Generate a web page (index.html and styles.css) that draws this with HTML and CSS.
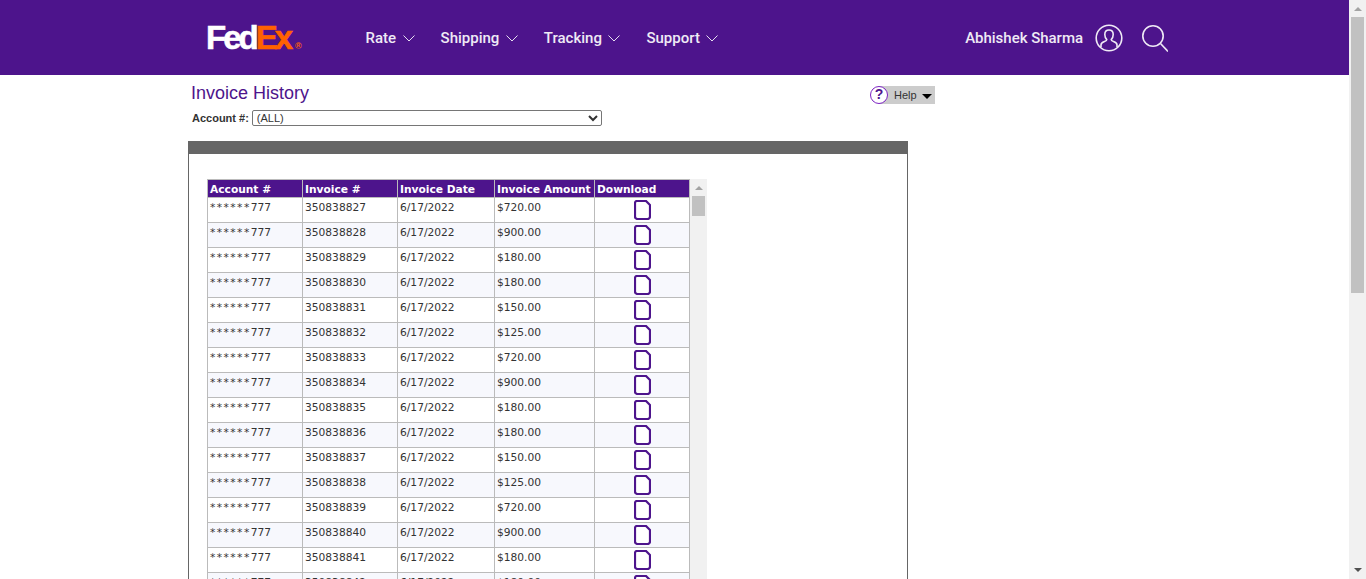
FILE: index.html
```html
<!DOCTYPE html>
<html lang="en">
<head>
  <meta charset="UTF-8">
  <title>Invoice History</title>
  <link rel="stylesheet" href="styles.css">
</head>
<body>

<svg class="defs" width="0" height="0">
  <symbol id="doc" viewBox="0 0 17 20">
    <path d="M3 1H12L16 5V16.500A2.500 2.500 0 0 1 13.500 19H3.500A2.500 2.500 0 0 1 1 16.500V3A2 2 0 0 1 3 1Z" fill="#fff" stroke="#4d148c" stroke-width="2.200"/>
  </symbol>
  <symbol id="chev" viewBox="0 0 12 7">
    <path d="M.5 .5L6 6L11.500 .5" fill="none" stroke="#e6dff0" stroke-width="1"/>
  </symbol>
</svg>

<div class="page">
  <div class="main">
    <header class="topbar">
      <div class="logo"><span class="fed">Fed</span><span class="ex">Ex</span><span class="reg">®</span></div>
      <nav class="nav">
        <a class="navitem">Rate <svg class="chev"><use href="#chev"/></svg></a>
        <a class="navitem">Shipping <svg class="chev"><use href="#chev"/></svg></a>
        <a class="navitem">Tracking <svg class="chev"><use href="#chev"/></svg></a>
        <a class="navitem">Support <svg class="chev"><use href="#chev"/></svg></a>
      </nav>
      <div class="user">
        <span class="username">Abhishek Sharma</span>
        <svg class="usericon" width="28" height="28" viewBox="0 0 28 28" fill="none" stroke="#efeaf5" stroke-width="1.600">
          <circle cx="14" cy="14" r="12.800"/>
          <path d="M6 23V21C6 19 7.500 18.300 9.500 17.600C11 17.100 11.800 16.600 11.800 15.600C10.500 14.300 9.800 12.500 9.800 10.500C9.800 7.800 11.500 6 14 6C16.500 6 18.200 7.800 18.200 10.500C18.200 12.500 17.500 14.300 16.200 15.600C16.200 16.600 17 17.100 18.500 17.600C20.500 18.300 22 19 22 21V23"/>
        </svg>
        <svg class="searchicon" width="26" height="27" viewBox="0 0 26 27" fill="none" stroke="#efeaf5" stroke-width="1.600">
          <circle cx="11" cy="11" r="10.200"/>
          <path d="M18.500 18.500L26 26.500"/>
        </svg>
      </div>
    </header>

    <div class="content">
      <div class="titlerow">
        <div>
          <h1>Invoice History</h1>
          <form class="acct">
            <label for="acct">Account #:</label>
            <select id="acct"><option>(ALL)</option></select>
          </form>
        </div>
        <div class="help">
          <span class="helpmark">?</span>
          <span class="helptext">Help</span>
          <span class="helparrow"></span>
        </div>
      </div>

      <div class="panel">
        <div class="panelbar"></div>
        <div class="panelbody">
          <table class="invoices">
            <colgroup>
              <col class="c1"><col class="c2"><col class="c3"><col class="c4"><col class="c5">
            </colgroup>
            <thead>
              <tr><th>Account #</th><th>Invoice #</th><th>Invoice Date</th><th>Invoice Amount</th><th>Download</th></tr>
            </thead>
            <tbody>
              <tr><td><span class="mask">******</span>777</td><td>350838827</td><td>6/17/2022</td><td>$720.00</td><td class="dl"><svg class="doc"><use href="#doc"/></svg></td></tr>
              <tr><td><span class="mask">******</span>777</td><td>350838828</td><td>6/17/2022</td><td>$900.00</td><td class="dl"><svg class="doc"><use href="#doc"/></svg></td></tr>
              <tr><td><span class="mask">******</span>777</td><td>350838829</td><td>6/17/2022</td><td>$180.00</td><td class="dl"><svg class="doc"><use href="#doc"/></svg></td></tr>
              <tr><td><span class="mask">******</span>777</td><td>350838830</td><td>6/17/2022</td><td>$180.00</td><td class="dl"><svg class="doc"><use href="#doc"/></svg></td></tr>
              <tr><td><span class="mask">******</span>777</td><td>350838831</td><td>6/17/2022</td><td>$150.00</td><td class="dl"><svg class="doc"><use href="#doc"/></svg></td></tr>
              <tr><td><span class="mask">******</span>777</td><td>350838832</td><td>6/17/2022</td><td>$125.00</td><td class="dl"><svg class="doc"><use href="#doc"/></svg></td></tr>
              <tr><td><span class="mask">******</span>777</td><td>350838833</td><td>6/17/2022</td><td>$720.00</td><td class="dl"><svg class="doc"><use href="#doc"/></svg></td></tr>
              <tr><td><span class="mask">******</span>777</td><td>350838834</td><td>6/17/2022</td><td>$900.00</td><td class="dl"><svg class="doc"><use href="#doc"/></svg></td></tr>
              <tr><td><span class="mask">******</span>777</td><td>350838835</td><td>6/17/2022</td><td>$180.00</td><td class="dl"><svg class="doc"><use href="#doc"/></svg></td></tr>
              <tr><td><span class="mask">******</span>777</td><td>350838836</td><td>6/17/2022</td><td>$180.00</td><td class="dl"><svg class="doc"><use href="#doc"/></svg></td></tr>
              <tr><td><span class="mask">******</span>777</td><td>350838837</td><td>6/17/2022</td><td>$150.00</td><td class="dl"><svg class="doc"><use href="#doc"/></svg></td></tr>
              <tr><td><span class="mask">******</span>777</td><td>350838838</td><td>6/17/2022</td><td>$125.00</td><td class="dl"><svg class="doc"><use href="#doc"/></svg></td></tr>
              <tr><td><span class="mask">******</span>777</td><td>350838839</td><td>6/17/2022</td><td>$720.00</td><td class="dl"><svg class="doc"><use href="#doc"/></svg></td></tr>
              <tr><td><span class="mask">******</span>777</td><td>350838840</td><td>6/17/2022</td><td>$900.00</td><td class="dl"><svg class="doc"><use href="#doc"/></svg></td></tr>
              <tr><td><span class="mask">******</span>777</td><td>350838841</td><td>6/17/2022</td><td>$180.00</td><td class="dl"><svg class="doc"><use href="#doc"/></svg></td></tr>
              <tr><td><span class="mask">******</span>777</td><td>350838842</td><td>6/17/2022</td><td>$180.00</td><td class="dl"><svg class="doc"><use href="#doc"/></svg></td></tr>
            </tbody>
          </table>
          <div class="scroll inner">
            <span class="up"></span>
            <span class="thumb"></span>
          </div>
        </div>
      </div>
    </div>
  </div>

  <div class="scroll outer">
    <span class="up"></span>
    <span class="thumb"></span>
    <span class="down"></span>
  </div>
</div>

</body>
</html>
```

FILE: styles.css
```css
html, body {
  margin: 0;
  height: 579px;
  overflow: hidden;
  background: #fff;
}
.defs {
  position: absolute;
}
.page {
  display: flex;
  height: 579px;
  font-family: "Liberation Sans", Arial, sans-serif;
}
.main {
  flex: 1;
  min-width: 0;
  overflow: hidden;
}

/* top bar */
.topbar {
  display: flex;
  align-items: center;
  height: 75px;
  padding: 0 181px 0 206px;
  background: #4d148c;
}
.logo {
  display: flex;
  align-items: baseline;
  width: 159.5px;
  font-family: "Liberation Sans", sans-serif;
  font-weight: bold;
  font-size: 33px;
  letter-spacing: -3px;
  line-height: 1;
  -webkit-text-stroke: .6px currentColor;
}
.fed {
  color: #fff;
}
.ex {
  color: #ff6200;
}
.reg {
  font-size: 9px;
  letter-spacing: 0;
  font-weight: bold;
  color: #ff6200;
  margin-left: 5px;
  -webkit-text-stroke: 0;
}
.nav {
  display: flex;
  gap: 26px;
}
.navitem {
  display: flex;
  align-items: center;
  gap: 6.5px;
  font-family: Roboto, sans-serif;
  font-weight: 500;
  font-size: 15px;
  color: #efeaf5;
}
.chev {
  width: 12px;
  height: 7px;
  margin-top: 2px;
}
.user {
  display: flex;
  align-items: center;
  margin-left: auto;
}
.username {
  font-family: Roboto, sans-serif;
  font-weight: 500;
  font-size: 15px;
  letter-spacing: -.02px;
  color: #efeaf5;
  margin-right: 12px;
}
.usericon {
  margin-right: 19px;
}
.searchicon {
  margin-top: 1px;
}

/* heading row */
.content {
  padding-left: 188px;
}
.titlerow {
  display: flex;
  width: 747px;
  height: 66px;
  justify-content: space-between;
}
h1 {
  margin: 7px 0 0 3px;
  font-size: 18px;
  line-height: 22px;
  font-weight: normal;
  color: #4d148c;
}
.acct {
  display: flex;
  align-items: center;
  gap: 3px;
  margin: 6px 0 0 4px;
}
.acct label {
  font-size: 11px;
  font-weight: bold;
  color: #333;
}
.acct select {
  width: 350px;
  height: 16px;
  padding: 0;
  font-family: "Liberation Sans", sans-serif;
  font-size: 11px;
  background: #fff;
  color: #333;
  border: 1px solid #767676;
  border-radius: 2px;
}
.help {
  display: flex;
  align-items: center;
  align-self: flex-start;
  width: 65px;
  height: 18px;
  margin-top: 11px;
  background: linear-gradient(to right, #fff 9px, #ccc 9px);
}
.helpmark {
  box-sizing: border-box;
  width: 18px;
  height: 18px;
  border: 1.5px solid #7d22c3;
  border-radius: 50%;
  background: #fff;
  font-size: 14px;
  font-weight: bold;
  line-height: 15px;
  text-align: center;
  color: #4d148c;
}
.helptext {
  margin-left: 6px;
  font-size: 11px;
  color: #333;
}
.helparrow {
  margin: 2px 0 0 5px;
  border-style: solid;
  border-width: 5px 5px 0;
  border-color: #000 transparent transparent;
}

/* panel */
.panel {
  box-sizing: border-box;
  width: 720px;
  border: 1px solid #666;
  border-top: 0;
}
.panelbar {
  height: 13px;
  margin: 0 -1px;
  background: #666;
}
.panelbody {
  display: flex;
  align-items: flex-start;
  padding: 25px 0 0 18px;
}
.invoices {
  table-layout: fixed;
  width: 483px;
  border-collapse: collapse;
  font-family: "DejaVu Sans", Verdana, sans-serif;
  font-size: 8pt;
  color: #333;
}
.c1, .c2 {
  width: 95px;
}
.c3 {
  width: 97px;
}
.c4 {
  width: 100px;
}
th, td {
  padding: 0 2px;
  border: 1px solid #bbb;
  overflow: hidden;
  white-space: nowrap;
}
th {
  height: 15px;
  padding-top: 2px;
  background: #4d148c;
  color: #fff;
  font-weight: bold;
  text-align: left;
}
td {
  height: 24px;
  vertical-align: top;
  line-height: 19px;
}
tbody tr:nth-child(even) td {
  background: #f7f8fd;
}
.mask {
  letter-spacing: 1.45px;
}
td.dl {
  text-align: center;
  line-height: 0;
  padding-top: 2px;
  height: 22px;
}
.doc {
  width: 17px;
  height: 20px;
}

/* scrollbars */
.scroll {
  display: flex;
  flex-direction: column;
  align-items: center;
  flex: none;
  width: 17px;
  background: #f1f1f1;
}
.inner {
  height: 400px;
}
.outer {
  height: 579px;
}
.up {
  margin: 7px 0 6px;
  border-style: solid;
  border-width: 0 4px 4px;
  border-color: transparent transparent #a3a3a3;
}
.down {
  margin: auto 0 7px;
  border-style: solid;
  border-width: 4px 4px 0;
  border-color: #505050 transparent transparent;
}
.thumb {
  width: 13px;
  background: #c1c1c1;
}
.inner .thumb {
  height: 20px;
}
.outer .thumb {
  height: 276px;
}
```
